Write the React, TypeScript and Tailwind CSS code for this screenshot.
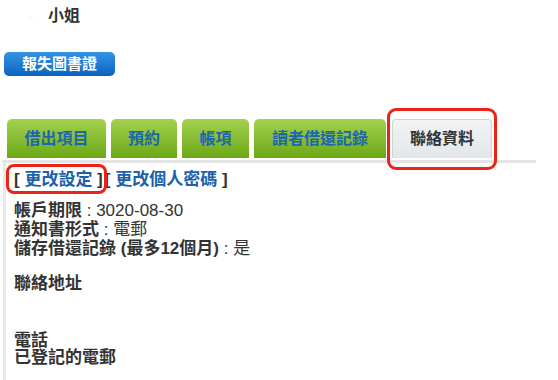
const font = "font-['Liberation_Sans','Noto_Sans_CJK_TC',sans-serif]";

const tabs = [
  { label: "借出項目", w: "w-[99px]" },
  { label: "預約", w: "w-[66px]" },
  { label: "帳項", w: "w-[67px]" },
  { label: "讀者借還記錄", w: "w-[132px]" },
];

export default function App() {
  return (
    <div className={`${font} relative h-[380px] w-[558px] overflow-hidden bg-white text-[#333]`}>
      <div className="flex h-[30px] items-center pl-[28px] pt-[2px]">
        <span className="w-[20px] text-[10px] text-[#d8d8d8] blur-[1px]">··</span>
        <span className="text-[16px] font-bold leading-none text-[#333]">小姐</span>
      </div>

      <div className="mt-[22px] pl-[4px]">
        <button className="flex h-[24px] w-[111px] items-center justify-center rounded-[5px] bg-gradient-to-b from-[#3593e6] to-[#0664bf] text-[15px] font-bold text-white">
          報失圖書證
        </button>
      </div>

      <div className="mt-[43px] flex gap-[5px] pl-[7px]">
        {tabs.map((t) => (
          <div
            key={t.label}
            className={`${t.w} flex h-[39px] items-center justify-center rounded-t-[5px] bg-gradient-to-b from-[#a4d24e] to-[#6aa80f] text-[16px] font-bold text-[#1b66ad]`}
          >
            {t.label}
          </div>
        ))}
        <div className="relative ml-[1px]">
          <div className="flex h-[39px] w-[100px] items-center justify-center rounded-t-[4px] border border-b-0 border-[#cfd6c2] bg-gradient-to-b from-[#f1f3f5] to-[#e3e7ea] text-[16px] font-bold text-[#333]">
            聯絡資料
          </div>
          <div className="pointer-events-none absolute -left-[5px] -right-[5px] -top-[11px] -bottom-[12px] rounded-[9px] border-[3px] border-[#ec2318]" />
        </div>
      </div>

      <div className="ml-[2px] mt-[2px] h-[3px] w-[534px] bg-[#e4e4e4]" />

      <div className="ml-[3px] border-l-[3px] border-[#e8e8e8] pl-[8px] pt-[7px]">
        <div className="flex text-[17px] font-bold leading-[20px]">
          <span className="relative">
            [ <span className="text-[#1c62a8]">更改設定</span> ]
            <span className="pointer-events-none absolute -left-[8px] -right-[4px] -top-[6px] -bottom-[4px] rounded-[8px] border-[3px] border-[#ec2318]" />
          </span>
          <span className="ml-[2px]">
            [ <span className="text-[#1c62a8]">更改個人密碼</span> ]
          </span>
        </div>

        <div className="mt-[11px] text-[17px] leading-[19px]">
          <div>
            <span className="font-bold">帳戶期限</span> : 3020-08-30
          </div>
          <div>
            <span className="font-bold">通知書形式</span> : 電郵
          </div>
          <div>
            <span className="font-bold">儲存借還記錄 (最多12個月)</span> : 是
          </div>
        </div>

        <div className="mt-[16px] text-[17px] font-bold leading-[19px]">聯絡地址</div>

        <div className="mt-[39px] pb-[20px] text-[17px] font-bold leading-[17px]">
          <div>電話</div>
          <div>已登記的電郵</div>
        </div>
      </div>
    </div>
  );
}
